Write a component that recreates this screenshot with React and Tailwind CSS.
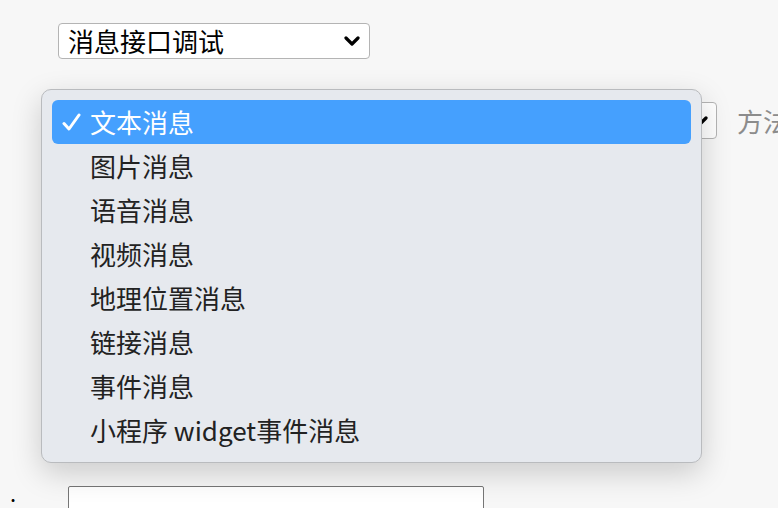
const items = ["文本消息", "图片消息", "语音消息", "视频消息", "地理位置消息", "链接消息", "事件消息", "小程序 widget事件消息"]

function Chevron({ className }) {
    return (
        <svg className={className} viewBox="0 0 16 12" fill="none" stroke="currentColor" strokeWidth="3.2" strokeLinecap="round" strokeLinejoin="round">
            <polyline points="2,3 8,9 14,3" />
        </svg>
    )
}

export default function App() {
    return (
        <div className="relative h-[508px] w-[778px] overflow-hidden bg-[#f7f7f7] font-['Noto_Sans_CJK_SC','Noto_Sans',sans-serif] text-[#1f1f1f]">
            <div className="pt-[23px] pl-[58px]">
                <div className="flex h-[36px] w-[312px] items-center justify-between rounded-[4px] border border-[#b4b4b4] bg-white pl-[9px] pr-[9px]">
                    <span className="text-[26px] leading-none text-black">消息接口调试</span>
                    <Chevron className="h-[12px] w-[16px] text-black" />
                </div>
            </div>

            <div className="mt-[43px] flex items-center">
                <div className="ml-[300px] flex h-[37px] w-[417px] shrink-0 items-center justify-end rounded-[4px] border border-[#b4b4b4] bg-white pr-[8px]">
                    <Chevron className="h-[12px] w-[16px] text-black" />
                </div>
                <span className="ml-[20px] whitespace-nowrap text-[26px] leading-none text-[#8c8c8c]">方法</span>
            </div>

            <div className="mt-[347px] flex items-start">
                <span className="w-[68px] shrink-0 pl-[10px] pt-[4px] text-[22px] leading-none text-black">:</span>
                <div className="h-[40px] w-[416px] rounded-[2px] border border-[#767676] bg-white" />
            </div>

            <div className="absolute left-[41px] top-[89px] w-[661px] rounded-[10px] border border-[#b9bbbe] bg-[#e6e9ee] px-[10px] pt-[10px] pb-[10px] shadow-[0_10px_30px_rgba(0,0,0,0.18)]">
                {items.map((item, i) => (
                    <div
                        key={item}
                        className={`flex h-[44px] items-center rounded-[6px] pl-[10px] text-[26px] leading-none ${i === 0 ? "bg-[#45a0fe] text-white" : "text-[#222]"}`}
                    >
                        <span className="flex w-[28px] items-center">
                            {i === 0 && (
                                <svg className="h-[19px] w-[19px]" viewBox="0 0 19 19" fill="none" stroke="currentColor" strokeWidth="3" strokeLinecap="round" strokeLinejoin="round">
                                    <polyline points="2,10.5 7,16 17,2" />
                                </svg>
                            )}
                        </span>
                        <span>{item}</span>
                    </div>
                ))}
            </div>
        </div>
    )
}
